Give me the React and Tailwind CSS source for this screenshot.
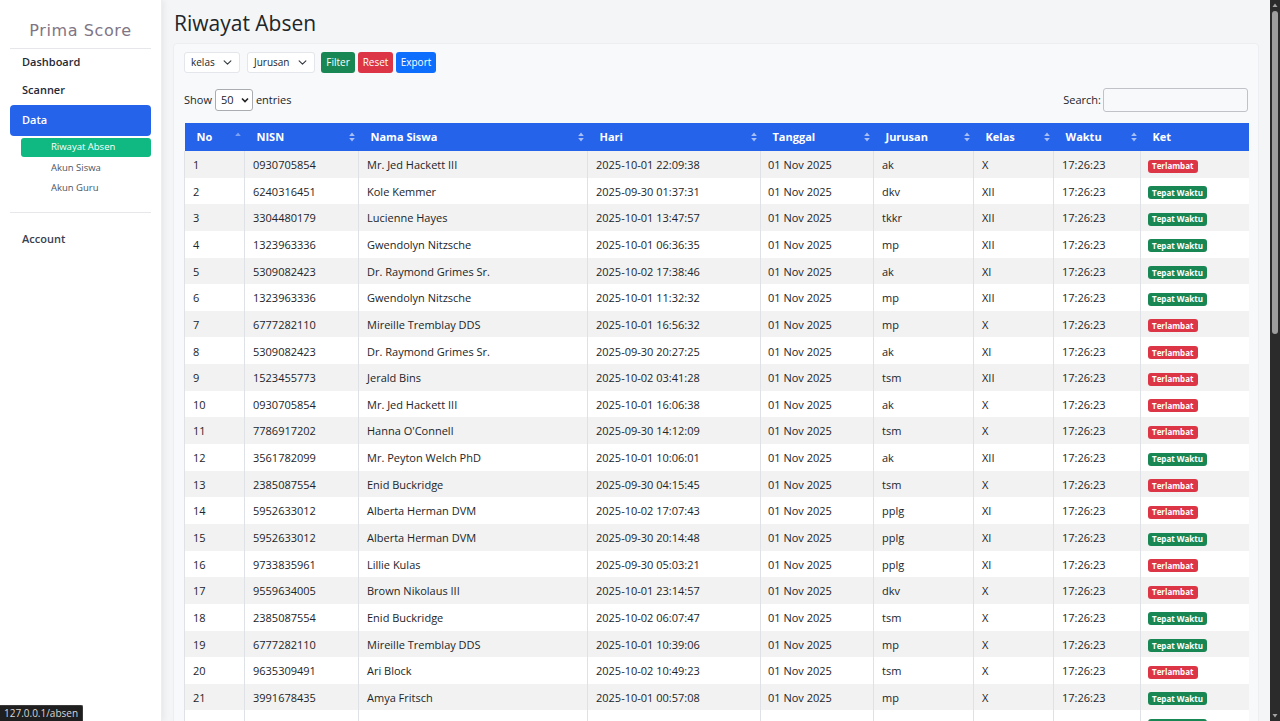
import React from 'react'

const T = 'Terlambat'
const W = 'Tepat Waktu'

const rows = [
  ['0930705854', 'Mr. Jed Hackett III', '2025-10-01 22:09:38', 'ak', 'X', T],
  ['6240316451', 'Kole Kemmer', '2025-09-30 01:37:31', 'dkv', 'XII', W],
  ['3304480179', 'Lucienne Hayes', '2025-10-01 13:47:57', 'tkkr', 'XII', W],
  ['1323963336', 'Gwendolyn Nitzsche', '2025-10-01 06:36:35', 'mp', 'XII', W],
  ['5309082423', 'Dr. Raymond Grimes Sr.', '2025-10-02 17:38:46', 'ak', 'XI', W],
  ['1323963336', 'Gwendolyn Nitzsche', '2025-10-01 11:32:32', 'mp', 'XII', W],
  ['6777282110', 'Mireille Tremblay DDS', '2025-10-01 16:56:32', 'mp', 'X', T],
  ['5309082423', 'Dr. Raymond Grimes Sr.', '2025-09-30 20:27:25', 'ak', 'XI', T],
  ['1523455773', 'Jerald Bins', '2025-10-02 03:41:28', 'tsm', 'XII', T],
  ['0930705854', 'Mr. Jed Hackett III', '2025-10-01 16:06:38', 'ak', 'X', T],
  ['7786917202', "Hanna O'Connell", '2025-09-30 14:12:09', 'tsm', 'X', T],
  ['3561782099', 'Mr. Peyton Welch PhD', '2025-10-01 10:06:01', 'ak', 'XII', W],
  ['2385087554', 'Enid Buckridge', '2025-09-30 04:15:45', 'tsm', 'X', T],
  ['5952633012', 'Alberta Herman DVM', '2025-10-02 17:07:43', 'pplg', 'XI', T],
  ['5952633012', 'Alberta Herman DVM', '2025-09-30 20:14:48', 'pplg', 'XI', W],
  ['9733835961', 'Lillie Kulas', '2025-09-30 05:03:21', 'pplg', 'XI', T],
  ['9559634005', 'Brown Nikolaus III', '2025-10-01 23:14:57', 'dkv', 'X', T],
  ['2385087554', 'Enid Buckridge', '2025-10-02 06:07:47', 'tsm', 'X', W],
  ['6777282110', 'Mireille Tremblay DDS', '2025-10-01 10:39:06', 'mp', 'X', W],
  ['9635309491', 'Ari Block', '2025-10-02 10:49:23', 'tsm', 'X', T],
  ['3991678435', 'Amya Fritsch', '2025-10-01 00:57:08', 'mp', 'X', W],
  ['6240316451', 'Mrs. Lorine Dietrich', '2025-10-02 08:11:54', 'dkv', 'XII', W],
]

const columns = [
  { label: 'No', w: 'w-[60px]', up: true },
  { label: 'NISN', w: 'w-[114px]' },
  { label: 'Nama Siswa', w: 'w-[229px]' },
  { label: 'Hari', w: 'w-[173px]' },
  { label: 'Tanggal', w: 'w-[113px]' },
  { label: 'Jurusan', w: 'w-[100px]' },
  { label: 'Kelas', w: 'w-[80px]' },
  { label: 'Waktu', w: 'w-[87px]' },
  { label: 'Ket', w: 'w-[108px]', none: true },
]

const SortIcon = ({ up }) => (
  <svg width="6" height="10" viewBox="0 0 6 10" className={up ? 'opacity-40' : 'opacity-60'}>
    <path d="M3 0.5 L5.8 4 H0.2 Z" fill="currentColor" />
    {!up && <path d="M3 9.5 L5.8 6 H0.2 Z" fill="currentColor" />}
  </svg>
)

const Chevron = () => (
  <svg width="9" height="9" viewBox="0 0 16 16" fill="none" stroke="#343a40" strokeWidth="2" strokeLinecap="round" strokeLinejoin="round">
    <path d="M2 5l6 6 6-6" />
  </svg>
)

const Sidebar = () => (
  <aside className="w-[162px] shrink-0 bg-white shadow-[2px_0_6px_rgba(0,0,0,0.06)] border-r border-[#eceef1] px-[10px] z-10">
    <div className="h-[48px] flex items-center justify-center pt-[14px] text-[16px] tracking-[0.6px] text-[#7f7585] font-['DejaVu_Sans',sans-serif]">
      Prima Score
    </div>
    <div className="border-t border-[#e5e7eb]" />
    <nav className="flex flex-col">
      <div className="h-[27px] flex items-center px-[12px] text-[11px] font-semibold text-[#1f2937]">Dashboard</div>
      <div className="h-[28px] flex items-center px-[12px] text-[11px] font-semibold text-[#1f2937]">Scanner</div>
      <div className="mt-[1px] h-[31px] flex items-center px-[12px] rounded-[4px] bg-[#2563eb] text-white text-[11px] font-semibold">Data</div>
      <div className="ml-[11px] mt-[2px] h-[19px] flex items-center pl-[30px] rounded-[3px] bg-[#10b981] text-white text-[9.5px]">Riwayat Absen</div>
      <div className="ml-[11px] h-[22px] flex items-center pl-[30px] text-[9.5px] text-[#4b5563]">Akun Siswa</div>
      <div className="ml-[11px] h-[18px] flex items-center pl-[30px] text-[9.5px] text-[#4b5563]">Akun Guru</div>
    </nav>
    <div className="mt-[15px] border-t border-[#e5e7eb]" />
    <div className="mt-[12px] h-[28px] flex items-center px-[12px] text-[11px] font-semibold text-[#374151]">Account</div>
  </aside>
)

const Badge = ({ text }) => (
  <span className={`inline-flex items-center h-[13px] px-[4px] rounded-[3px] text-[8px] font-bold text-white ${text === T ? 'bg-[#dc3545]' : 'bg-[#198754]'}`}>
    {text}
  </span>
)

const Scrollbar = () => (
  <div className="w-[10px] shrink-0 bg-[#2b2b2b] flex flex-col items-center">
    <svg width="6" height="5" viewBox="0 0 6 5" className="mt-[3px]"><path d="M3 0.5L5.5 4H0.5Z" fill="#a3a3a3" /></svg>
    <div className="mt-[3px] w-[6px] h-[323px] rounded-full bg-[#9e9e9e]" />
    <div className="flex-1" />
    <svg width="6" height="5" viewBox="0 0 6 5" className="mb-[3px]"><path d="M3 4.5L5.5 1H0.5Z" fill="#a3a3a3" /></svg>
  </div>
)

export default function App() {
  return (
    <div className="relative h-[721px] w-[1280px] overflow-hidden flex bg-[#f4f5f7] font-['Open_Sans',sans-serif] text-[#212529]">
      <Sidebar />
      <main className="flex-1 min-w-0 px-[11px] pt-[8px] overflow-hidden">
        <h1 className="text-[21px] leading-[30px] font-medium text-[#212529] pl-[1px]">Riwayat Absen</h1>
        <section className="mt-[5px] rounded-[4px] border border-[#eceef1] bg-[#f8f9fa] px-[10px] pt-[8px]">
          <div className="flex items-center gap-[3px]">
            <div className="w-[56px] h-[21px] mr-[4px] flex items-center justify-between pl-[6px] pr-[7px] bg-white border border-[#e3e6ea] rounded-[3px] text-[10px]">
              kelas <Chevron />
            </div>
            <div className="w-[68px] h-[21px] mr-[3px] flex items-center justify-between pl-[6px] pr-[7px] bg-white border border-[#e3e6ea] rounded-[3px] text-[10px]">
              Jurusan <Chevron />
            </div>
            <button className="w-[34px] h-[21px] rounded-[3px] bg-[#198754] text-white text-[10px]">Filter</button>
            <button className="w-[35px] h-[21px] rounded-[3px] bg-[#dc3545] text-white text-[10px]">Reset</button>
            <button className="w-[40px] h-[21px] rounded-[3px] bg-[#0d6efd] text-white text-[10px]">Export</button>
          </div>
          <div className="mt-[15px] flex items-center justify-between text-[11px]">
            <div className="flex items-center gap-[3px]">
              Show
              <div className="w-[38px] h-[22px] flex items-center justify-between pl-[5px] pr-[3px] border border-[#a9acb0] rounded-[3px] bg-white text-[11px]">
                50
                <svg width="8" height="6" viewBox="0 0 8 6"><path d="M1 1.5l3 3 3-3" stroke="#222" strokeWidth="1.6" fill="none" /></svg>
              </div>
              entries
            </div>
            <div className="flex items-center gap-[2px]">
              Search:
              <div className="w-[145px] h-[24px] border border-[#bfc3c8] rounded-[3px]" />
            </div>
          </div>
          <table className="mt-[11px] w-[1064px] table-fixed border-collapse text-[11px]">
            <colgroup>
              {columns.map((c) => (
                <col key={c.label} className={c.w} />
              ))}
            </colgroup>
            <thead>
              <tr className="h-[28px] bg-[#2563eb] text-white">
                {columns.map((c) => (
                  <th key={c.label} className="text-left font-bold pl-[12px] pr-[4px]">
                    <div className="flex items-center justify-between">
                      <span>{c.label}</span>
                      {!c.none && <SortIcon up={c.up} />}
                    </div>
                  </th>
                ))}
              </tr>
            </thead>
            <tbody>
              {rows.map((r, i) => (
                <tr key={i} className={`h-[26.65px] ${i % 2 === 0 ? 'bg-[#f2f2f2]' : 'bg-white'}`}>
                  <td className="pl-[8px] pt-[2px] border-l border-[#dee2e6]">{i + 1}</td>
                  <td className="pl-[8px] pt-[2px] border-l border-[#dee2e6]">{r[0]}</td>
                  <td className="pl-[8px] pt-[2px] border-l border-[#dee2e6]">{r[1]}</td>
                  <td className="pl-[8px] pt-[2px] border-l border-[#dee2e6]">{r[2]}</td>
                  <td className="pl-[7px] pt-[2px] border-l border-[#dee2e6]">01 Nov 2025</td>
                  <td className="pl-[8px] pt-[2px] border-l border-[#dee2e6]">{r[3]}</td>
                  <td className="pl-[8px] pt-[2px] border-l border-[#dee2e6]">{r[4]}</td>
                  <td className="pl-[8px] pt-[2px] border-l border-[#dee2e6]">17:26:23</td>
                  <td className="pl-[7px] pt-[2px] border-l border-[#dee2e6]"><Badge text={r[5]} /></td>
                </tr>
              ))}
            </tbody>
          </table>
        </section>
      </main>
      <Scrollbar />
      <div className="absolute z-20 left-0 bottom-0 h-[16px] px-[4px] flex items-center bg-[#1f1f1f] border-t border-r border-[#3a3a3a] rounded-tr-[2px] text-[10px] text-[#d6d6d6]">
        127.0.0.1/absen
      </div>
    </div>
  )
}
